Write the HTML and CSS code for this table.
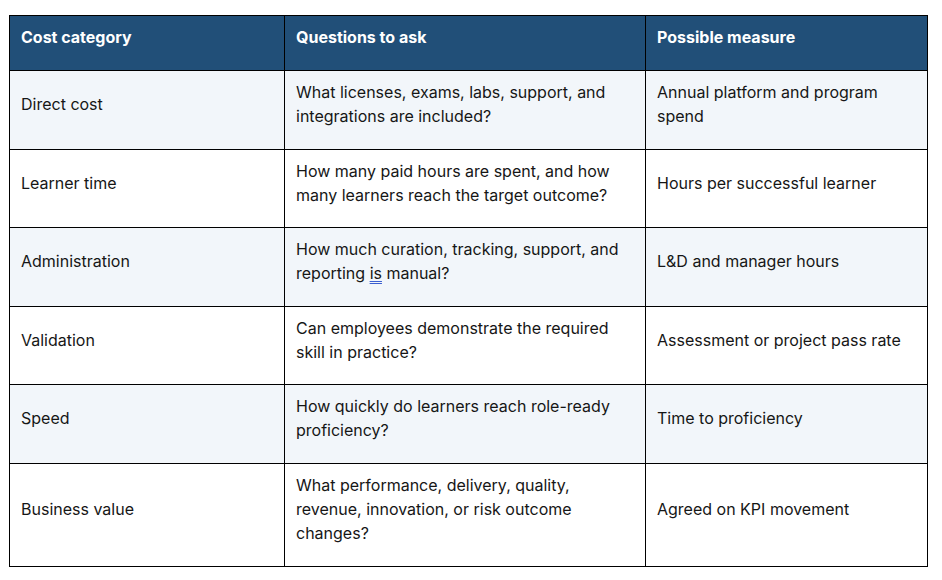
FILE: index.html
```html
<!DOCTYPE html>
<html>
<head>
<meta charset="utf-8">
<link rel="stylesheet" href="styles.css">
</head>
<body>
<table class="grid">
  <colgroup>
    <col class="c1">
    <col class="c2">
    <col class="c3">
  </colgroup>
  <thead>
    <tr>
      <th><p>Cost category</p></th>
      <th><p>Questions to ask</p></th>
      <th><p>Possible measure</p></th>
    </tr>
  </thead>
  <tbody>
    <tr class="alt">
      <td><p>Direct cost</p></td>
      <td><p>What licenses, exams, labs, support, and integrations are included?</p></td>
      <td><p>Annual platform and program spend</p></td>
    </tr>
    <tr>
      <td><p>Learner time</p></td>
      <td><p>How many paid hours are spent, and how many learners reach the target outcome?</p></td>
      <td><p>Hours per successful learner</p></td>
    </tr>
    <tr class="alt">
      <td><p>Administration</p></td>
      <td><p>How much curation, tracking, support, and reporting <span class="gram">is</span> manual?</p></td>
      <td><p>L&amp;D and manager hours</p></td>
    </tr>
    <tr>
      <td><p>Validation</p></td>
      <td><p>Can employees demonstrate the required skill in practice?</p></td>
      <td><p>Assessment or project pass rate</p></td>
    </tr>
    <tr class="alt">
      <td><p>Speed</p></td>
      <td><p>How quickly do learners reach role-ready proficiency?</p></td>
      <td><p>Time to proficiency</p></td>
    </tr>
    <tr>
      <td><p>Business value</p></td>
      <td><p>What performance, delivery, quality, revenue, innovation, or risk outcome changes?</p></td>
      <td><p>Agreed on KPI movement</p></td>
    </tr>
  </tbody>
</table>
</body>
</html>
```
FILE: styles.css
```css
html, body {
  margin: 0;
  padding: 0;
  background: #ffffff;
}
body {
  padding: 15px 0 0 9px;
  font-family: "Inter", "Liberation Sans", sans-serif;
  font-size: 16px;
  color: #161616;
}
.grid {
  border-collapse: collapse;
  width: 918px;
  table-layout: fixed;
}
.c1 { width: 275px; }
.c2 { width: 361px; }
.c3 { width: 282px; }
.grid th, .grid td {
  border: 1px solid #000000;
  padding: 9px 10px 9.6px 11px;
  vertical-align: middle;
  text-align: left;
}
.grid p {
  margin: 0 0 11px 0;
  line-height: 24px;
}
.grid th {
  background: #214f78;
  color: #ffffff;
  font-weight: 700;
  padding-top: 9px;
  padding-bottom: 10px;
}
.grid tr.alt td {
  background: #f2f6fa;
}
.gram {
  text-decoration: underline double #3b5fd0;
  text-decoration-thickness: 1px;
  text-underline-offset: 2px;
}
```
